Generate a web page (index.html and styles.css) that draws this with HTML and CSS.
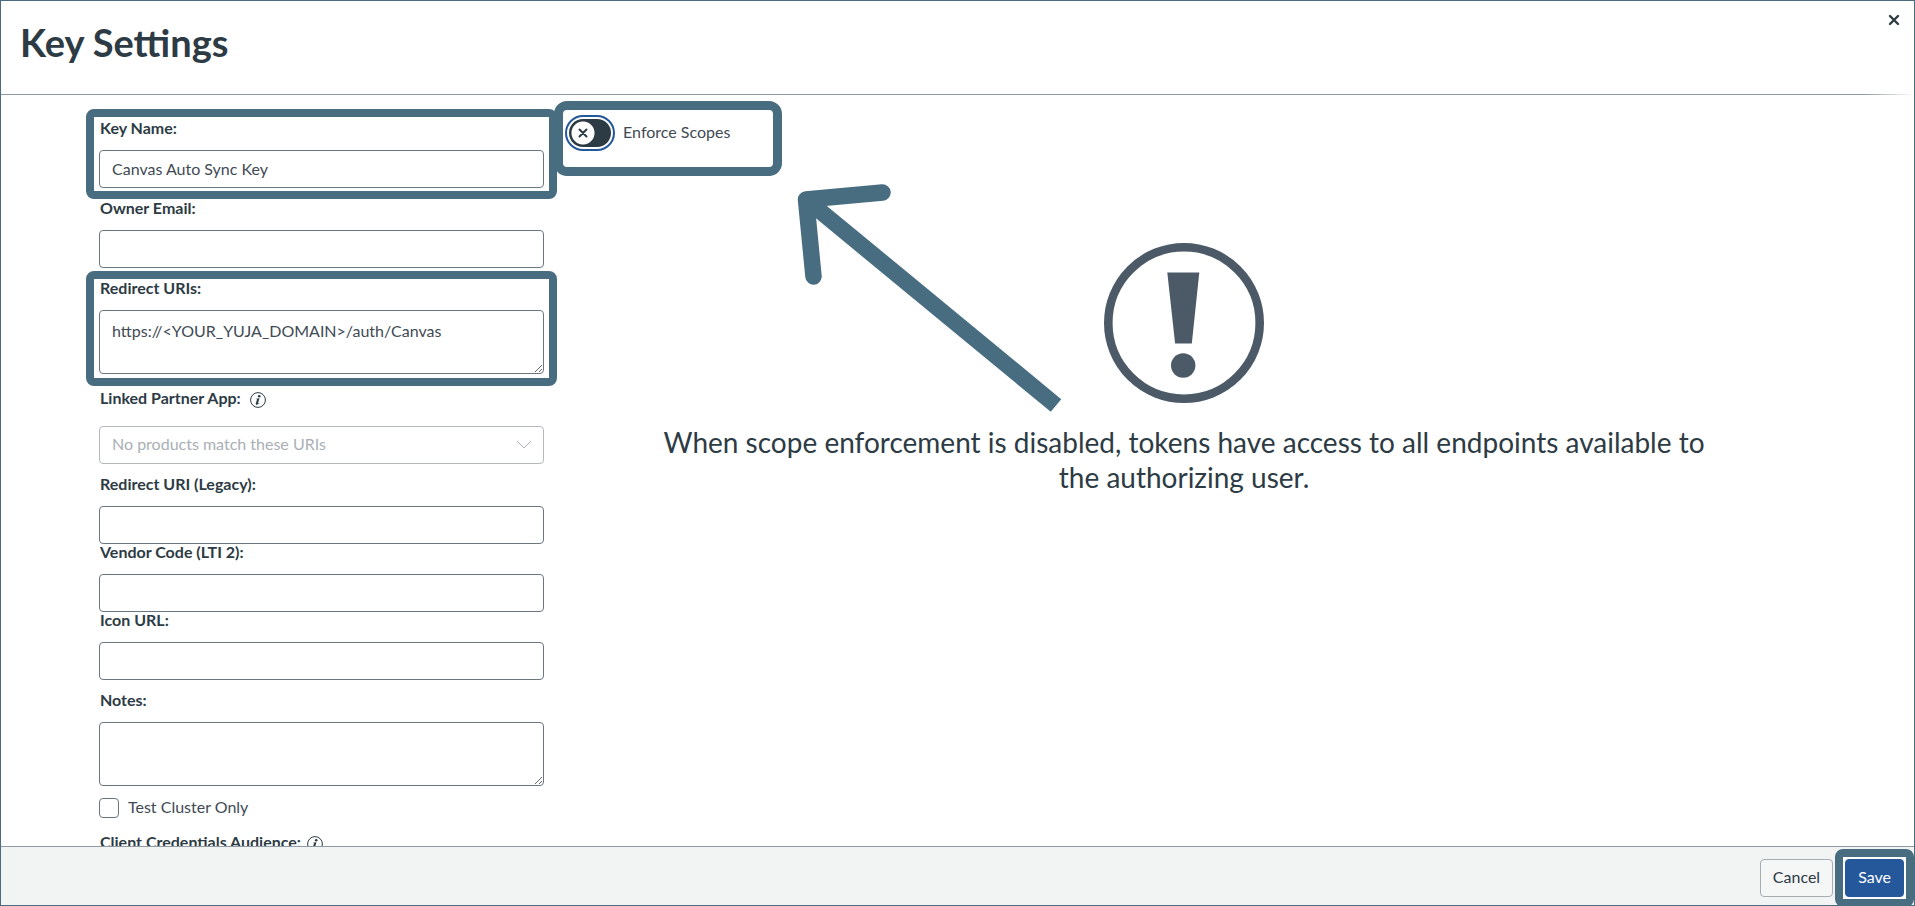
FILE: index.html
```html
<!DOCTYPE html>
<html lang="en">
<head>
  <meta charset="utf-8">
  <meta name="viewport" content="width=device-width, initial-scale=1">
  <title>Key Settings</title>
  <link rel="stylesheet" href="styles.css">
</head>
<body>
  <div class="dialog" role="dialog" aria-labelledby="dialog-title">
    <header class="dialog-header">
      <h1 class="dialog-title" id="dialog-title">Key Settings</h1>
      <button class="close" type="button" aria-label="Close">
        <svg viewBox="0 0 12 12" width="12" height="12" aria-hidden="true"><path d="M2 2l8 8M10 2l-8 8"/></svg>
      </button>
    </header>

    <main class="dialog-body">
      <form class="form" id="key-form">
        <div class="field callout callout-name">
          <label class="label" for="key-name">Key Name:</label>
          <input class="control" id="key-name" type="text" value="Canvas Auto Sync Key">
        </div>
        <div class="field">
          <label class="label" for="owner-email">Owner Email:</label>
          <input class="control" id="owner-email" type="text">
        </div>
        <div class="field callout callout-uris">
          <label class="label" for="redirect-uris">Redirect URIs:</label>
          <textarea class="control control-area" id="redirect-uris">https://&lt;YOUR_YUJA_DOMAIN&gt;/auth/Canvas</textarea>
        </div>
        <div class="field field-info">
          <div class="label-row">
            <label class="label" for="partner-app">Linked Partner App:</label>
            <button class="info" type="button" aria-label="About linked partner apps">
              <svg viewBox="0 0 16 16" width="16" height="16" aria-hidden="true"><circle cx="8" cy="8" r="7.4"/><path class="info-mark" d="M6 6.700l3.500-.5-1.500 5c-.1.5.2.5 1-.5l.4.3c-.9 1.300-1.700 1.700-2.500 1.700-.9 0-1.300-.5-1.100-1.300l1.100-3.700c.1-.4-.1-.6-.9-.6z"/><circle class="info-mark" cx="9.200" cy="4.200" r="1.300"/></svg>
            </button>
          </div>
          <div class="select">
            <select class="control control-select" id="partner-app" disabled>
              <option>No products match these URIs</option>
            </select>
            <svg class="chevron" viewBox="0 0 16 10" width="16" height="10" aria-hidden="true"><path d="M1 1l7 7 7-7"/></svg>
          </div>
        </div>
        <div class="group">
          <div class="field">
            <label class="label" for="redirect-legacy">Redirect URI (Legacy):</label>
            <input class="control" id="redirect-legacy" type="text">
          </div>
          <div class="field">
            <label class="label" for="vendor-code">Vendor Code (LTI 2):</label>
            <input class="control" id="vendor-code" type="text">
          </div>
          <div class="field">
            <label class="label" for="icon-url">Icon URL:</label>
            <input class="control" id="icon-url" type="text">
          </div>
        </div>
        <div class="field">
          <label class="label" for="notes">Notes:</label>
          <textarea class="control control-area" id="notes"></textarea>
        </div>
        <div class="check">
          <input class="check-box" id="test-cluster" type="checkbox">
          <label class="check-label" for="test-cluster">Test Cluster Only</label>
        </div>
        <div class="field field-info">
          <div class="label-row label-row-tight">
            <label class="label" for="audience">Client Credentials Audience:</label>
            <button class="info" type="button" aria-label="About client credentials audience">
              <svg viewBox="0 0 16 16" width="16" height="16" aria-hidden="true"><circle cx="8" cy="8" r="7.4"/><path class="info-mark" d="M6 6.700l3.500-.5-1.500 5c-.1.5.2.5 1-.5l.4.3c-.9 1.300-1.700 1.700-2.500 1.700-.9 0-1.300-.5-1.100-1.300l1.100-3.700c.1-.4-.1-.6-.9-.6z"/><circle class="info-mark" cx="9.200" cy="4.200" r="1.300"/></svg>
            </button>
          </div>
          <input class="control" id="audience" type="text">
        </div>
      </form>

      <section class="scopes">
        <div class="switch-row">
          <span class="switch">
            <input class="switch-input" id="enforce-scopes" type="checkbox" role="switch">
            <svg class="switch-x" viewBox="0 0 12 12" width="12" height="12" aria-hidden="true"><path d="M2.500 2.500l7 7M9.500 2.500l-7 7"/></svg>
          </span>
          <label class="check-label" for="enforce-scopes">Enforce Scopes</label>
        </div>
        <div class="notice">
          <svg class="notice-icon" viewBox="0 0 160 160" width="160" height="160" aria-hidden="true">
            <circle class="notice-ring" cx="80" cy="80" r="75.7"/>
            <path d="M63.3 29.5h32l-7.5 71h-16.700z"/>
            <circle cx="79.2" cy="122.500" r="12.200"/>
          </svg>
          <p class="notice-text">When scope enforcement is disabled, tokens have access to all endpoints available to the authorizing user.</p>
        </div>
        <svg class="arrow" viewBox="796 183 270 232" width="270" height="232" aria-hidden="true">
          <path d="M805.500 199L1056 405.500"/>
          <path class="arrow-head" d="M882.500 192.500L806 199.500L813.500 276.500"/>
        </svg>
      </section>
    </main>

    <footer class="dialog-footer">
      <button class="button" type="button">Cancel</button>
      <button class="button button-primary callout callout-save" type="submit" form="key-form">Save</button>
    </footer>
  </div>
</body>
</html>
```

FILE: styles.css
```css
:root {
  --ink: #2d3b45;
  --ink-soft: #3f4a54;
  --line: #6b7780;
  --rule: #8f9aa5;
  --callout: #486d80;
  --blue: #25589b;
}

* {
  box-sizing: border-box;
}

body {
  margin: 0;
  color: var(--ink);
  font: 16px/20px Lato, "Liberation Sans", sans-serif;
}

button,
input,
select,
textarea {
  margin: 0;
  font: inherit;
  color: inherit;
}

.dialog {
  display: flex;
  flex-direction: column;
  height: 100vh;
  border: 1px solid var(--callout);
  background: #fff;
}

.dialog-header {
  display: flex;
  align-items: flex-start;
  justify-content: space-between;
  padding: 1px 2px 1px 19px;
  background: linear-gradient(to right, var(--rule) calc(100% - 50px), #fff) left bottom / 100% 1px no-repeat;
}

.dialog-title {
  margin: 0;
  padding: 16px 0 28px;
  font-size: 38px;
  line-height: 48px;
  font-weight: 700;
}

.close {
  display: grid;
  place-items: center;
  width: 36px;
  height: 36px;
  padding: 0;
  border: 0;
  background: none;
}

.close path,
.switch-x path {
  fill: none;
  stroke: var(--ink);
  stroke-width: 2.400;
  stroke-linecap: round;
}

.switch-x path {
  stroke-width: 2;
}

.dialog-body {
  flex: 1;
  min-height: 0;
  overflow: hidden;
  display: grid;
  grid-template-columns: minmax(0, 14fr) minmax(0, 39fr);
  column-gap: 20px;
  padding: 0 110px 0 98px;
}

.form {
  display: flex;
  flex-direction: column;
  gap: 12px;
  padding-top: 25px;
}

.field {
  display: flex;
  flex-direction: column;
  gap: 14px;
}

.group {
  display: flex;
  flex-direction: column;
}

.label {
  padding-left: 1px;
  line-height: 16px;
  font-weight: 700;
}

.label-row {
  display: flex;
  align-items: flex-start;
  gap: 9px;
}

.label-row-tight {
  gap: 6px;
}

.field-info {
  gap: 18px;
  margin-top: 4px;
}

.info {
  display: block;
  width: 16px;
  height: 16px;
  margin-top: 2px;
  padding: 0;
  border: 0;
  background: none;
}

.info svg {
  display: block;
  fill: none;
  stroke: var(--ink);
}

.info .info-mark {
  fill: var(--ink);
  stroke: none;
}

.control {
  display: block;
  width: 100%;
  height: 38px;
  padding: 0 12px 2px;
  border: 1px solid var(--line);
  border-radius: 4px;
  background: #fff;
  color: var(--ink-soft);
}

.control-area {
  height: 64px;
  padding: 10px 12px;
  resize: vertical;
}

.select {
  position: relative;
}

.control-select {
  appearance: none;
  border-color: #b3b8bd;
  color: #a9afb5;
  opacity: 1;
}

.chevron {
  position: absolute;
  top: 14px;
  right: 12px;
  fill: none;
  stroke: #a9afb5;
  pointer-events: none;
}

.check {
  display: flex;
  align-items: center;
  gap: 9px;
  color: var(--ink-soft);
}

.check-label {
  padding-bottom: 2px;
  line-height: 18px;
}

.check-box {
  appearance: none;
  width: 20px;
  height: 20px;
  border: 1px solid var(--line);
  border-radius: 4px;
}

.scopes {
  position: relative;
  padding-top: 24px;
}

.switch-row {
  position: relative;
  display: flex;
  align-items: center;
  gap: 12px;
  width: max-content;
  padding-left: 5px;
  color: var(--ink-soft);
}

.switch-row::after {
  content: "";
  position: absolute;
  inset: -18px -52px -29px -10px;
  border: 9px solid var(--callout);
  border-radius: 13px;
  pointer-events: none;
}

.switch {
  position: relative;
  display: block;
  width: 42px;
  height: 28px;
}

.switch-input {
  appearance: none;
  display: block;
  width: 42px;
  height: 28px;
  border-radius: 14px;
  background: radial-gradient(circle at 14px 14px, #fff 11px, var(--ink) 12px);
  outline: 2px solid var(--blue);
  outline-offset: 2px;
}

.switch-x {
  position: absolute;
  top: 8px;
  left: 8px;
  pointer-events: none;
}

.notice {
  display: flex;
  flex-direction: column;
  align-items: center;
  gap: 22px;
  padding: 96px 80px 0;
}

.notice-icon {
  fill: #4c5a67;
}

.notice-ring {
  fill: none;
  stroke: #4c5a67;
  stroke-width: 8.600;
}

.notice-text {
  max-width: 1080px;
  margin: 0;
  font-size: 28px;
  line-height: 35px;
  text-align: center;
}

.arrow {
  position: absolute;
  top: 88px;
  left: 232px;
  fill: none;
  stroke: var(--callout);
  stroke-width: 16.500;
  pointer-events: none;
}

.arrow-head {
  stroke-linecap: round;
  stroke-linejoin: round;
}

.callout {
  position: relative;
}

.callout::after {
  content: "";
  position: absolute;
  border: 8px solid var(--callout);
  border-radius: 8px;
  pointer-events: none;
}

.callout-name::after {
  inset: -11px -13px;
}

.callout-uris::after {
  inset: -9px -13px -12px;
}

.dialog-footer {
  display: flex;
  justify-content: flex-end;
  gap: 12px;
  padding: 12px 10px 8px;
  border-top: 1px solid var(--rule);
  background: #f2f4f4;
}

.button {
  height: 38px;
  padding: 0 12px 2px;
  border: 1px solid #a5adb5;
  border-radius: 4px;
  background: #f5f6f6;
}

.button-primary {
  border-color: var(--blue);
  background: var(--blue);
  color: #fff;
}

.callout-save::after {
  inset: -11px;
  box-shadow: inset 0 0 0 2px #fff;
}
```
